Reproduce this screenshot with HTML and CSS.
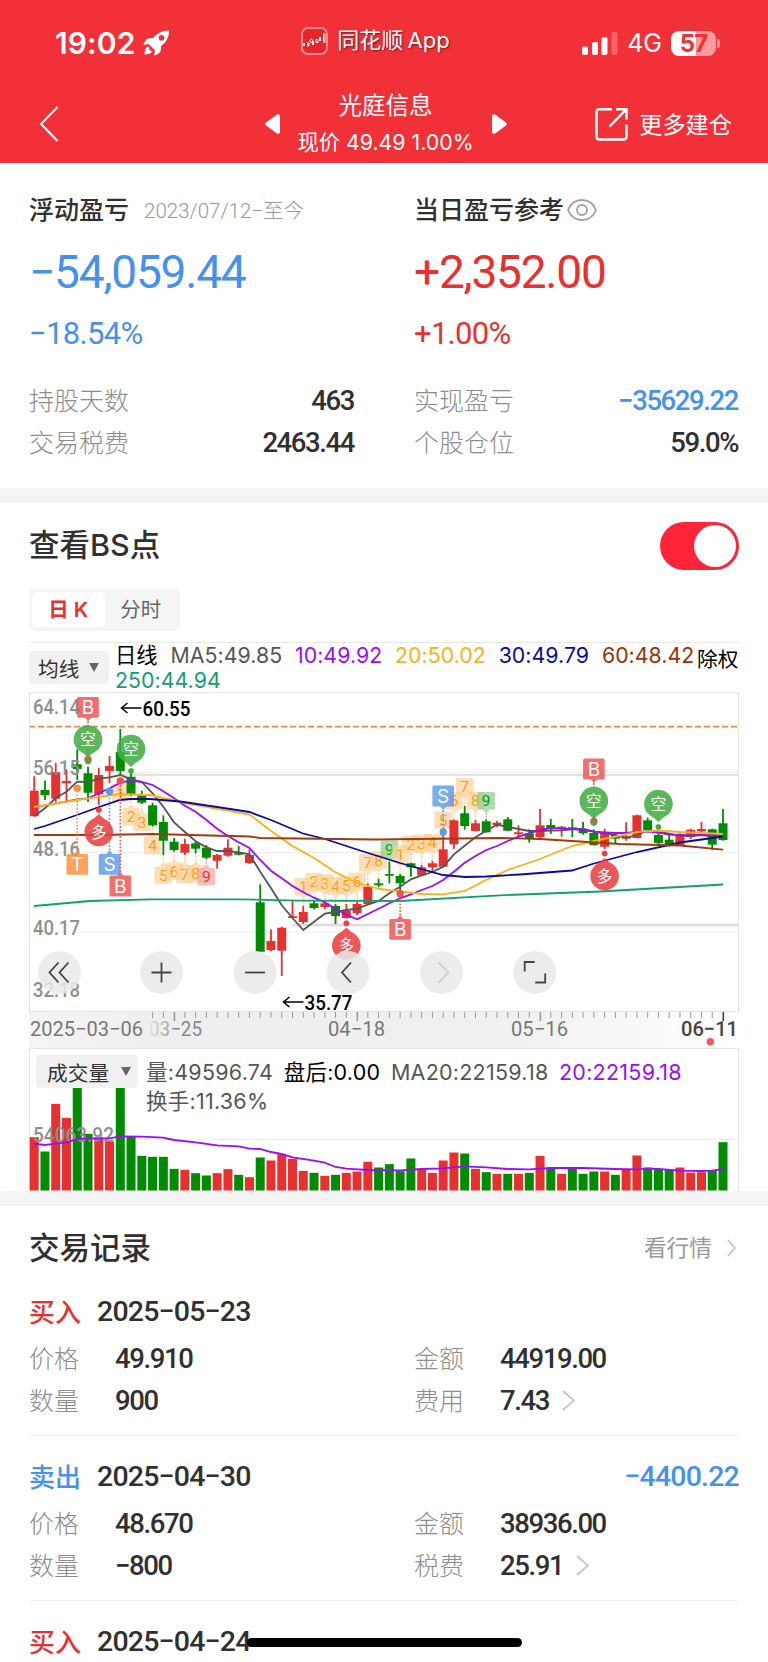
FILE: index.html
```html
<!DOCTYPE html>
<html lang="zh-CN">
<head>
    <meta charset="UTF-8">
    <meta name="viewport" content="width=device-width, initial-scale=1.0">
    <title>光庭信息 - 交易记录</title>
    <link rel="stylesheet" href="styles.css">
</head>
<body>
    <header class="header">
        <div class="status-bar">
            <div class="status-time">
                <span class="clock">19:02</span>
                <svg class="rocket" width="27" height="26" viewBox="0 0 27 26">
                    <path fill="#fff" fill-rule="evenodd" d="M26 0.5C19 0.5 13.500 3.500 10 8L4.500 8.500C2.500 10 1 12.500 0.500 15L5.500 14L12 20.500L11 25.500C13.500 25 16 23.500 17.500 21.500L18.200 16C23 12.500 26.300 7 26 0.500ZM18.500 5A2.800 2.800 0 1 1 18.500 10.600A2.800 2.800 0 0 1 18.500 5Z"/>
                    <path fill="#fff" d="M5 16.500C2.500 17.500 1.500 21 1.500 24.500C5 24.500 8.500 23.500 9.500 21L7.500 21.500L7.800 19.500L5.500 20L6.500 17.800Z"/>
                </svg>
            </div>
            <div class="status-app">
                <svg width="27" height="28" viewBox="0 0 27 28">
                    <rect x="1" y="1" width="25" height="26" rx="6" fill="#e6262c" stroke="#f98a8d" stroke-width="2"/>
                    <path stroke="#fff" stroke-width="2" d="M3 16v3M12 14v4M19 10v4"/>
                    <path stroke="#fff" fill="none" d="M6.500 16h1.500v3h-1.500zM9 13.500l1.500-2l1 2v2h-2zM15 12.500h2v3h-2zM22.500 6.500h1.500v9h-1.500z"/>
                </svg>
                <span>同花顺 App</span>
            </div>
            <div class="status-right">
                <svg width="36" height="23" viewBox="0 0 36 23">
                    <rect x="0" y="14.500" width="6" height="8.500" rx="2" fill="#fff"/>
                    <rect x="10" y="10" width="6" height="13" rx="2" fill="#fff"/>
                    <rect x="19.500" y="5" width="6" height="18" rx="2" fill="#fff"/>
                    <rect x="29.500" y="0" width="6" height="23" rx="2" fill="#fff" opacity="0.250"/>
                </svg>
                <span class="network">4G</span>
                <div class="battery"><span>57</span></div>
            </div>
        </div>
        <nav class="nav-bar">
            <svg class="nav-back" width="20" height="36" viewBox="0 0 20 36">
                <path d="M18.500 1L2 18L18.500 35" fill="none" stroke="#fff" stroke-width="2"/>
            </svg>
            <div class="nav-title">
                <svg width="16" height="20" viewBox="0 0 16 20"><path fill="#fff" d="M1 8.500L11.500 0.800Q15 -1 15 2.500V17.500Q15 21 11.500 19.200L1 11.500Q-0.500 10 1 8.500Z"/></svg>
                <div class="nav-stock">
                    <div class="stock-name">光庭信息</div>
                    <div class="stock-price">现价 49.49 1.00%</div>
                </div>
                <svg width="16" height="20" viewBox="0 0 16 20"><path fill="#fff" d="M15 8.500L4.500 0.800Q1 -1 1 2.500V17.500Q1 21 4.500 19.200L15 11.500Q16.500 10 15 8.500Z"/></svg>
            </div>
            <div class="nav-more">
                <svg width="34" height="34" viewBox="0 0 34 34" fill="none" stroke="#fff" stroke-width="2.400">
                    <path d="M17 2.200H4.500Q1.500 2.200 1.500 5.200V29.500Q1.500 32.500 4.500 32.500H28.500Q31.500 32.500 31.500 29.500V17.500"/>
                    <path d="M21 2.200H31.500V12.500M31.500 2.200L14.500 19.500"/>
                </svg>
                <span>更多建仓</span>
            </div>
        </nav>
    </header>

    <section class="summary">
        <div class="summary-col">
            <div class="summary-head"><b>浮动盈亏</b><span class="period">2023/07/12−至今</span></div>
            <div class="amount blue">−54,059.44</div>
            <div class="percent blue">−18.54%</div>
            <div class="row"><span class="label">持股天数</span><span class="num">463</span></div>
            <div class="row"><span class="label">交易税费</span><span class="num">2463.44</span></div>
        </div>
        <div class="summary-col">
            <div class="summary-head"><b>当日盈亏参考</b>
                <svg class="eye" width="30" height="22" viewBox="0 0 30 22" fill="none" stroke="#a0a0a0" stroke-width="1.800">
                    <path d="M1 11C4 3.500 9 1 15 1S26 3.500 29 11C26 18.500 21 21 15 21S4 18.500 1 11Z"/>
                    <circle cx="15" cy="11" r="5"/>
                </svg>
            </div>
            <div class="amount red">+2,352.00</div>
            <div class="percent red">+1.00%</div>
            <div class="row"><span class="label">实现盈亏</span><span class="num blue">−35629.22</span></div>
            <div class="row"><span class="label">个股仓位</span><span class="num">59.0%</span></div>
        </div>
    </section>

    <section class="chart-section">
        <div class="section-head">
            <h2>查看BS点</h2>
            <div class="switch"></div>
        </div>
        <div class="tabs"><span class="tab active">日 K</span><span class="tab">分时</span></div>

        <div class="ma-bar">
            <div class="select">均线<i></i></div>
            <div class="ma-list">
                <span class="c-black">日线</span>
                <span class="c-gray">MA5:49.85</span>
                <span class="c-purple">10:49.92</span>
                <span class="c-yellow">20:50.02</span>
                <span class="c-navy">30:49.79</span>
                <span class="c-brown">60:48.42</span>
                <span class="c-green">250:44.94</span>
            </div>
            <span class="rights">除权</span>
        </div>
        <svg id="priceChart" width="710" height="356" viewBox="29 692 710 356"></svg>

        <div class="volume">
            <svg id="volumeChart" width="710" height="143" viewBox="29 1048 710 143"></svg>
            <div class="volume-legend">
                <div class="select">成交量<i></i></div>
                <div class="volume-list">
                    <span class="c-gray">量:49596.74</span>
                    <span class="c-black">盘后:0.00</span>
                    <span class="c-gray">MA20:22159.18</span>
                    <span class="c-purple">20:22159.18</span>
                    <span class="c-gray">换手:11.36%</span>
                </div>
            </div>
        </div>
    </section>

    <section class="records">
        <div class="records-head">
            <h2>交易记录</h2>
            <div class="more"><span>看行情</span><svg width="9" height="18" viewBox="0 0 9 18"><path d="M1 1L8 9L1 17"/></svg></div>
        </div>

        <div class="record">
            <div class="record-head"><b class="red">买入</b><span class="date">2025−05−23</span></div>
            <div class="record-grid">
                <span class="label">价格</span><span class="num">49.910</span>
                <span class="label">金额</span><span class="num">44919.00</span>
                <span class="label">数量</span><span class="num">900</span>
                <span class="label">费用</span><span class="num">7.43<svg width="13" height="21" viewBox="0 0 13 21"><path d="M1 1L12 10.500L1 20"/></svg></span>
            </div>
        </div>
        <div class="record">
            <div class="record-head"><b class="blue">卖出</b><span class="date">2025−04−30</span><span class="profit blue">−4400.22</span></div>
            <div class="record-grid">
                <span class="label">价格</span><span class="num">48.670</span>
                <span class="label">金额</span><span class="num">38936.00</span>
                <span class="label">数量</span><span class="num">−800</span>
                <span class="label">税费</span><span class="num">25.91<svg width="13" height="21" viewBox="0 0 13 21"><path d="M1 1L12 10.500L1 20"/></svg></span>
            </div>
        </div>
        <div class="record">
            <div class="record-head"><b class="red">买入</b><span class="date">2025−04−24</span></div>
        </div>
    </section>
    <div class="home-indicator"></div>

    <script>
        var RED = "#e83030", GREEN = "#008c00";
        var x = i => 34.2 + i * 10.7625;

        // color, high, body top, body bottom, low
        var candles = [
            ["r",776.3,790.7,816.3,816.3],["g",780.7,790,795.3,800],["r",763,772.3,798.7,802],["r",769.5,781,783.3,801.5],
            ["g",749.3,764.3,769,780],["g",766.7,773.3,792.7,802],["r",767.7,775,794.3,805],["r",756,766,771,783.3],
            ["g",729,752,771,775],["g",773,776.7,794.3,796],["g",790.7,795.3,802.7,804],["g",802.7,805.3,825.3,826.7],
            ["g",815.3,822,840.7,855],["g",838,841.7,850,851.7],["r",838.7,844,852.7,855],["g",841.7,843.3,848.7,853.3],
            ["g",845,847.7,857.7,859],["r",854,855,860.7,868.7],["r",839.3,847.7,855.7,856.7],["g",846,853,854.7,855.3],
            ["r",849.3,855,863,864],["g",884.3,902.3,951.7,952.3],["r",929.3,941,950,951.3],["r",926.7,927.7,950.7,976],
            ["r",900.7,916.3,918,918],["r",905.7,912,922,924],["g",900,903.3,908,909.3],["r",900,903.3,907,909.3],
            ["g",904,906,916,924],["r",904,910.7,918,918.7],["r",901.7,904,913,915],["r",883.3,886.7,904,904.7],
            ["g",878.7,883.3,885.3,887.3],["g",861.7,874,875.7,883.3],["g",874,876,883.3,892],["g",862.7,863.3,867.3,876.7],
            ["r",865,867.3,875.3,876],["r",861,863.3,867.3,871.7],["r",835,849.3,866.7,867.3],["r",819.3,820.3,844.3,849],
            ["g",806,813.3,826,829.7],["r",820,823.3,831,831.3],["g",819.3,821.3,832.3,832.7],["r",821,822.7,825,827.3],
            ["g",817,819.3,830.7,831.3],["r",825.3,832.3,834.3,837.7],["g",829.3,833.3,838.7,842.7],["r",809,825.3,837,838],
            ["g",819,825,828.3,834],["r",826,826.7,828.7,836.7],["g",819,827.3,828.7,837.3],["g",822,829.3,833.3,834.7],
            ["g",829.3,833,845,845.7],["r",828.7,832.7,846.7,849],["g",833.3,835,838.7,844],["r",822.3,836.7,838.7,840.7],
            ["r",814.7,815.3,838,838.3],["g",817.7,820.3,830,832.7],["g",831.7,835,843,844],["g",835,839.7,845,846.7],
            ["r",833.3,834.3,845,845.7],["r",828.7,829.7,837,839],["r",821.7,829,831.3,833.3],["g",828.7,829.3,844.7,850],
            ["g",809,823.3,840,840.7]
        ];
        var ma5 = [816.3,808.3,798,791.7,781.7,782,778.7,777.3,775,779.3,782,793.3,806.7,822.3,832,841.3,847.3,851,851,852.3,854.3,871.7,888,905.3,918,930,921.7,913.7,912,910,908.7,904.7,901,893.3,886.7,879.3,875.3,872,866.7,854.3,845.7,837.3,830.7,824.7,827,829,831,831,830.7,830.3,829.3,828.7,831.7,833.3,835,837.7,835,830.7,832,833.7,835.7,836,835,836.3,834.7];
        var ma10 = [807,805.3,803.3,801.7,799.3,798.3,793.3,788.3,782.7,780.7,782,785,791.3,798.3,805.7,811.7,820,828.7,836,842.3,848,860,870.7,878.3,886,892.3,897.7,902.3,908.7,914.7,919.3,914,908.7,903.3,898.3,894.3,890,886,880,871.7,862.7,856,850,846,841,836.7,833.3,830,828,828.7,829,830,831.7,832.3,833,833,831.7,831.7,832.7,834.7,835,835.3,834.7,834.7,836];
        var ma20 = "34,807 77,800 120,794 150,795 190,804 249.5,814.5 271,831 292,845.7 314,858 335,872 357,883 380,889 422,894 443,894.3 465,891 486,880 508,870 540,859 572,846 594,841 615,836.7 637,832 658,830.5 680,832 702,833 723,834";
        var ma30 = "34,829 45,826 77,815 99,807 120,800 130,799 150,799 180,801.5 217,807 249.5,812 271,820 303,833.5 325,839 357,849.5 400,863 443,875 465,877 486,876.5 520,874.5 572,870.5 594,863.5 637,852 680,842.5 723,836.5";
        var ma60 = "34,835 100,835 152,834 250,836.5 260,838 375,839.5 500,838 540,839 572,841 620,844 680,845.5 723,849.7";
        var ma250 = "34,906 90,901 150,899.3 240,899.3 300,900.7 400,901 500,895.3 600,891.5 723,884.5";

        // sequence numbers: candle index, digit, center y
        var steps = [
            [8,1,793],[9,2,816.7],[10,3,822.3],[11,4,845.7],[12,5,875],[13,6,871.3],[14,7,874.3],[15,8,873.7],[16,9,876.7,"r"],
            [25,1,886.7],[26,2,881.7],[27,3,883],[28,4,886],[29,5,885],[30,6,881.3],[31,7,862.7],[32,8,860],[33,9,849.3,"g"],
            [34,1,854],[35,2,844],[36,3,843.3],[37,4,842.7],[38,5,820],[39,6,800.7],[40,7,786.7],[41,8,800.7],[42,9,800.7,"g"]
        ];
        // trade flags: letter, candle index, box y, dot y
        var flags = [
            ["B",5,707.3,759.5],["T",4,864.3,788.3],["S",7,864.3,791.5],["B",8,886,781],
            ["S",38,796,832],["B",34,929.3,893.7],["B",52,769,821.5]
        ];
        // balloons: text, candle index, center y, dot y
        var balloons = [
            ["空",5,739.5,761.5],["空",9,749,771],["空",52,801,823],["空",58,804,827],
            ["多",6,832,810],["多",29,945.5,923.3],["多",53,876,853.5]
        ];
        var volumes = [160,117,260,218,308,170,159,146,308,161,104,101,101,65,62,52,45,52,64,47,40,99,90,109,95,59,53,44,47,53,57,86,69,79,58,96,64,53,90,114,111,65,55,50,50,50,53,104,69,50,69,50,57,57,47,64,105,69,64,62,69,54,55,60,145];
        var volumeMa = [[0,311],[1,315],[2,311],[3,308],[4,297],[5,295],[7,295],[8,289],[10,290],[12,293],[13,300],[15,307],[17,316],[19,319],[20,326],[21,327],[22,336],[23,342],[24,352],[26,362],[27,368],[28,381],[29,386],[31,390],[34,391],[36,387],[38,385],[40,379],[42,382],[44,387],[46,388],[48,384],[51,384],[54,387],[56,388],[57,386],[58,387],[60,392],[62,393],[63,392],[64,387]];

        function rect(l, t, w, h, fill, extra) {
            return `<rect x="${l}" y="${t}" width="${w}" height="${h}" fill="${fill}" ${extra || ""}/>`;
        }
        function hline(l, r, y, color, w, extra) {
            return `<path d="M${l} ${y}H${r}" stroke="${color}" stroke-width="${w}" ${extra || ""}/>`;
        }
        function poly(points, color) {
            return `<polyline points="${points}" fill="none" stroke="${color}" stroke-width="1.8"/>`;
        }
        function text(str, l, y, len, cls) {
            return `<text x="${l}" y="${y}" textLength="${len}" lengthAdjust="spacingAndGlyphs" class="${cls}">${str}</text>`;
        }

        function drawPrice() {
            var s = "";
            [772.3, 852.3, 932].forEach(y => s += hline(29, 739, y, "#ececec", 1));
            s += hline(122, 739, 774.8, "#dcdcdc", 1.8) + hline(293, 739, 925, "#dcdcdc", 2.4);
            s += hline(29, 739, 726.7, "#f78a2c", 1.7, 'stroke-dasharray="6 3"');

            steps.forEach(([i, n, y, c]) => {
                var bg = c === "r" ? "#f99b9b" : c === "g" ? "#82cc82" : "#fdcf91";
                var fg = c === "r" ? "#e83030" : c === "g" ? "#0a9a0a" : "#f7a01c";
                var candle = candles[i], down = y < candle[1];
                var end = down ? candle[1] : candle[4];
                var tip = down ? y + 12.5 : y - 12.5, base = down ? y + 8.5 : y - 8.5;
                s += `<path d="M${x(i)} ${tip}V${end}" stroke="${bg}" stroke-width="1.3" stroke-dasharray="2 1"/>`;
                s += `<g opacity="0.65">${rect(x(i) - 8.8, y - 8.8, 17.6, 17.6, bg, 'rx="1.5"')}<path d="M${x(i) - 4} ${base}H${x(i) + 4}L${x(i)} ${tip}Z" fill="${bg}"/></g>`;
                s += `<text x="${x(i)}" y="${y + 5.5}" text-anchor="middle" class="step" fill="${fg}">${n}</text>`;
            });

            candles.forEach((c, i) => {
                var color = c[0] === "r" ? RED : GREEN;
                s += rect(x(i) - 0.9, c[1], 1.8, c[4] - c[1], color);
                s += rect(x(i) - 4.5, c[2], 9, c[3] - c[2], color);
            });
            [["64.14", 713.5], ["56.15", 775], ["48.16", 855.5], ["40.17", 935], ["32.18", 997]].forEach(([t, y]) => s += text(t, 33, y, 47, "axis"));

            s += poly(ma5.map((y, i) => x(i) + "," + y).join(" "), "#555");
            s += poly(ma10.map((y, i) => x(i) + "," + y).join(" "), "#9a0cff");
            s += poly(ma20, "#fdb01a") + poly(ma30, "#0a0aa0") + poly(ma60, "#a03a08") + poly(ma250, "#12a070");

            flags.forEach(([t, i, y, dot]) => {
                var color = t === "B" ? "#ee5050" : t === "S" ? "#5a9cf0" : "#fd9038";
                var dir = dot > y ? 1 : -1;
                s += `<path d="M${x(i)} ${y + dir * 14}V${dot}" stroke="${color}" stroke-width="1.6" stroke-dasharray="1.7 1.7"/>`;
                s += `<circle cx="${x(i)}" cy="${dot}" r="3.7" fill="${color}"/>`;
                s += `<g opacity="0.82">${rect(x(i) - 10.8, y - 10.4, 21.6, 20.8, color, 'rx="1.5"')}<path d="M${x(i) - 3.5} ${y + dir * 10}h7l-3.5 ${dir * 4}z" fill="${color}"/></g>`;
                s += `<text x="${x(i)}" y="${y + 6.7}" text-anchor="middle" class="flag">${t}</text>`;
            });
            balloons.forEach(([t, i, y, dot]) => {
                var color = t === "空" ? "#43ad43" : "#ea4040";
                var dir = dot > y ? 1 : -1;
                s += `<circle cx="${x(i)}" cy="${dot}" r="2.8" fill="${color}" stroke="${color}" stroke-opacity="0.3"/>`;
                s += `<g opacity="0.87"><circle cx="${x(i)}" cy="${y}" r="14.3" fill="${color}"/><path d="M${x(i) - 6} ${y + dir * 12.5}L${x(i)} ${y + dir * 18}L${x(i) + 6} ${y + dir * 12.5}Z" fill="${color}"/></g>`;
                s += `<text x="${x(i)}" y="${y + 5.5}" text-anchor="middle" class="balloon">${t}</text>`;
            });

            // highest and lowest price
            [[121.5, 708, "60.55"], [283.5, 1002, "35.77"]].forEach(([l, y, t]) => {
                s += `<path d="M${l + 20} ${y}H${l}M${l + 6} ${y - 5}L${l} ${y}L${l + 6} ${y + 5}" fill="none" stroke="#000" stroke-width="1.5"/>`;
                s += text(t, l + 21, y + 7.5, 48, "peak");
            });

            // control buttons
            var icons = [
                [59.5, "M-1 -10L-10 0L-1 10M9 -10L0 0L9 10", "#444"], [161.5, "M-10 0H10M0 -10V10", "#444"],
                [255, "M-10 0H10", "#444"], [348, "M3 -10L-6 0L3 10", "#444"],
                [441.5, "M-3 -10L7 0L-3 10", "#cfcfcf"], [534.7, "M-10 -1V-10.500H0M10.500 1V10H0.500", "#444"]
            ];
            icons.forEach(([cx, d, color]) => {
                s += `<g transform="translate(${cx} 972.5)"><circle r="21.5" fill="#e9e9e9" opacity="0.85"/><path d="${d}" fill="none" stroke="${color}" stroke-width="1.8"/></g>`;
            });

            // date axis
            s += '<defs><linearGradient id="strip"><stop offset="0" stop-color="#f4f4f4"/><stop offset="0.2" stop-color="#eee"/><stop offset="0.7" stop-color="#f1f1f1"/><stop offset="1" stop-color="#fff"/></linearGradient>';
            s += '<linearGradient id="fade"><stop offset="0" stop-color="#999" stop-opacity="0.1"/><stop offset="0.5" stop-color="#888"/></linearGradient></defs>';
            s += rect(29, 1012, 710, 36, "url(#strip)");
            for (var i = 11; i < 65; i++) {
                var major = [13, 30, 47, 64].includes(i);
                s += rect(x(i) - 0.5, 1012, major ? 1.6 : 1, major ? 9 : 6, i === 64 ? "#444" : "#999");
            }
            s += text("2025−03−06", 30, 1036, 113, "axis-date") + `<g fill="url(#fade)">${text("03−25", 149, 1036, 53, "axis-plain")}</g>`;
            s += text("04−18", 328, 1036, 57, "axis-date") + text("05−16", 511, 1036, 57, "axis-date") + text("06−11", 681, 1036, 57, "axis-date last");
            s += '<circle cx="710.3" cy="1041.7" r="3.7" fill="#f35b5b"/>';
            s += '<path d="M738.500 1012V692.700H29.500V1012" fill="none" stroke="#e4e4e4"/>' + hline(29, 739, 1011.5, "#e4e4e4", 1);
            document.getElementById("priceChart").innerHTML = s;
        }

        function drawVolume() {
            var s = '<path d="M29.500 1191V1048.500H738.500V1191" fill="none" stroke="#e4e4e4"/>' + hline(29, 739, 1139.3, "#ececec", 1);
            volumes.forEach((v, i) => {
                s += rect(x(i) - 4.5, 1190.5 - v / 3, 9, v / 3, candles[i][0] === "r" ? RED : GREEN);
            });
            s += text("54063.92", 33, 1142, 81, "axis");
            s += poly(volumeMa.map(([i, v]) => x(i) + "," + (1040 + v / 3)).join(" "), "#9a0cff");
            document.getElementById("volumeChart").innerHTML = s;
        }

        drawPrice();
        drawVolume();
    </script>
</body>
</html>
```
FILE: styles.css
```css
* {
    box-sizing: border-box;
}
body {
    margin: 0;
    width: 768px;
    height: 1662px;
    overflow: hidden;
    background: #f4f4f4;
    color: #303030;
    font-family: Inter, "Noto Sans CJK SC", sans-serif;
}
h2 {
    margin: 0 0 5px;
    font-size: 30.5px;
    font-weight: 500;
}
svg {
    display: block;
    flex-shrink: 0;
}
.red { color: #eb2f2f; }
.blue { color: #4691ee; }

/* header */
.header {
    height: 163px;
    background: #f23037;
    color: #fff;
}
.status-bar {
    height: 86px;
    display: grid;
    grid-template-columns: 1fr auto 1fr;
    align-items: center;
    padding: 0 52px 0 55px;
}
.status-time, .status-app, .status-right {
    display: flex;
    align-items: center;
}
.clock {
    font-size: 30px;
    font-weight: 600;
    letter-spacing: 0.1px;
    margin-right: 8px;
}
.status-app {
    font-size: 22px;
    line-height: 28px;
    gap: 9px;
    margin-right: 20px;
    padding-bottom: 5px;
    word-spacing: -2px;
    text-shadow: 1px 1px 2px rgba(0, 0, 0, 0.5);
}
.status-app span {
    margin-top: -1px;
}
.status-right {
    justify-content: flex-end;
}
.network {
    font-size: 25px;
    margin: 0 9px;
}
.battery {
    position: relative;
    width: 45px;
    height: 25px;
    border-radius: 8px;
    background: linear-gradient(90deg, #fff 56%, #f99a9d 56%);
    color: #f23037;
    font-size: 24px;
    font-weight: 700;
    line-height: 25px;
    text-align: center;
    letter-spacing: -1px;
}
.battery::after {
    content: "";
    position: absolute;
    right: -4px;
    top: 8px;
    width: 3px;
    height: 9px;
    border-radius: 0 3px 3px 0;
    background: #f99a9d;
}
.nav-bar {
    display: grid;
    grid-template-columns: 1fr auto 1fr;
    align-items: center;
    height: 75px;
    padding: 0 36px 0 39px;
}
.nav-title {
    display: flex;
    align-items: center;
    gap: 16px;
}
.nav-stock {
    width: 178px;
    text-align: center;
    white-space: nowrap;
}
.stock-name {
    font-size: 23.5px;
    line-height: 37px;
}
.stock-price {
    font-size: 21.3px;
    line-height: 37px;
}
.nav-more {
    display: flex;
    align-items: center;
    justify-content: flex-end;
    gap: 10px;
    font-size: 23.2px;
}
.nav-more span {
    margin-top: -2px;
}

/* profit summary */
.summary {
    display: flex;
    gap: 60px;
    height: 325px;
    padding: 28px 30px 0 29px;
    background: #fff;
}
.summary-col {
    width: 325px;
}
.summary-col:last-child {
    width: 324px;
}
.summary-head {
    display: flex;
    align-items: center;
    height: 38px;
    font-size: 25px;
}
.summary-head b {
    margin-top: -4px;
    font-weight: 500;
}
.period {
    margin: -3px 0 0 15px;
    font-family: Roboto, "Noto Sans CJK SC", sans-serif;
    font-size: 20.5px;
    font-weight: 300;
    color: #999;
}
.eye {
    margin-left: 3px;
}
.amount, .percent, .num, .date, .profit {
    font-family: Roboto, sans-serif;
    font-weight: 500;
}
.amount {
    font-size: 46px;
    font-weight: 400;
    line-height: 86px;
    letter-spacing: -1.2px;
}
.percent {
    font-size: 31px;
    font-weight: 400;
    line-height: 38px;
    letter-spacing: -0.7px;
    margin-bottom: 26px;
}
.row {
    display: flex;
    justify-content: space-between;
    align-items: center;
    height: 42.500px;
}
.label {
    margin-top: -3px;
    font-size: 25px;
    font-weight: 300;
    color: #8d8d8d;
}
.num {
    font-size: 27.5px;
    letter-spacing: -1.4px;
}

/* chart */
.chart-section {
    margin-top: 15px;
    padding: 18px 29px 0;
    background: #fff;
}
.section-head {
    display: flex;
    justify-content: space-between;
    align-items: center;
    height: 49px;
}
.switch {
    width: 79px;
    height: 48px;
    padding: 3px;
    border-radius: 24px;
    background: #ff2438;
}
.switch::after {
    content: "";
    display: block;
    width: 42px;
    height: 42px;
    margin-left: auto;
    border-radius: 50%;
    background: #fff;
}
.tabs {
    display: flex;
    width: 151px;
    height: 43px;
    margin-top: 18px;
    padding: 4px 3px;
    border-radius: 6px;
    background: #f5f5f5;
}
.tab {
    flex: 1;
    line-height: 35px;
    text-align: center;
    font-size: 20.5px;
    color: #666;
}
.tab.active {
    border-radius: 5px;
    background: #fff;
    color: #eb2f2f;
    font-weight: 600;
}
.ma-bar {
    display: flex;
    height: 50px;
    margin-top: 11px;
    border-top: 1px solid #e8e8e8;
}
.select {
    display: flex;
    align-items: center;
    gap: 10px;
    height: 33px;
    padding: 0 9px;
    border-radius: 4px;
    background: #f1f1f1;
    color: #333;
    font-size: 20.7px;
    white-space: nowrap;
}
.select i {
    border: 5.5px solid transparent;
    border-top: 9px solid #666;
    border-bottom: 0;
}
.ma-bar .select {
    margin-top: 8px;
    width: 80px;
}
.ma-list {
    display: flex;
    flex-wrap: wrap;
    align-content: flex-start;
    width: 582px;
    margin-left: 6px;
    column-gap: 12.8px;
    font-size: 21.3px;
    line-height: 25px;
    letter-spacing: 0.05px;
    white-space: nowrap;
}
.rights {
    margin-top: 4px;
    font-size: 20.7px;
    line-height: 26px;
    color: #000;
    white-space: nowrap;
}
.c-black { color: #000; }
.c-gray { color: #555; }
.c-purple { color: #9a0cff; }
.c-yellow { color: #fdb01a; }
.c-navy { color: #0a0aa0; }
.c-brown { color: #983208; }
.c-green { color: #12a070; }
.axis, .axis-date, .axis-plain {
    font-family: Roboto, sans-serif;
    font-size: 21px;
}
.axis {
    fill: #8f8f8f;
    font-weight: 500;
}
.axis-date { fill: #777; }
.axis-date.last {
    fill: #444;
    font-weight: 500;
}
.peak {
    font-family: Roboto, sans-serif;
    font-size: 21px;
    font-weight: 500;
}
.step {
    font-family: Roboto, sans-serif;
    font-size: 15.5px;
}
.flag {
    font-size: 19px;
    fill: #fff;
}
.balloon {
    font-size: 15.500px;
    fill: #fff;
}

/* volume, the legend lies over the bars */
.volume {
    position: relative;
}
.volume-legend {
    position: absolute;
    top: 7px;
    left: 7px;
    display: flex;
}
.volume-legend .select {
    width: 102px;
    padding-left: 11px;
    gap: 12px;
}
.volume-list {
    display: flex;
    flex-wrap: wrap;
    width: 580px;
    margin: 3px 0 0 8px;
    column-gap: 10.5px;
    font-size: 21.5px;
    line-height: 29px;
    letter-spacing: 0.25px;
    white-space: nowrap;
}

/* trade records */
.records {
    height: 456px;
    overflow: hidden;
    margin-top: 15px;
    padding: 17px 29px 0;
    background: #fff;
}
.records-head {
    display: flex;
    justify-content: space-between;
    align-items: center;
    height: 50px;
}
.more {
    display: flex;
    align-items: center;
    gap: 15px;
    padding-right: 3px;
    font-size: 22.7px;
    color: #999;
}
.more span {
    margin-top: -3px;
}
.more path, .num path {
    fill: none;
    stroke: #c4c4c4;
    stroke-width: 1.8;
}
.record {
    height: 165px;
    padding-top: 18px;
    border-bottom: 1px solid #f2f2f2;
}
.records-head + .record {
    height: 163px;
    padding-top: 16px;
}
.record-head {
    display: flex;
    align-items: center;
    height: 44px;
}
.record-head b {
    width: 68px;
    margin-top: -2px;
    font-size: 26px;
    font-weight: 500;
}
.date {
    font-size: 28.5px;
    letter-spacing: -0.8px;
}
.profit {
    margin-left: auto;
    font-size: 28.5px;
    letter-spacing: -0.8px;
}
.record-grid {
    display: grid;
    grid-template-columns: 86px 299px 86px 1fr;
    grid-auto-rows: 42.5px;
    align-items: center;
    padding-top: 4px;
}
.record-grid .num {
    display: flex;
    align-items: center;
    gap: 13px;
}
.home-indicator {
    position: absolute;
    left: 247px;
    top: 1638px;
    width: 275px;
    height: 9px;
    border-radius: 5px;
    background: #000;
}
```
